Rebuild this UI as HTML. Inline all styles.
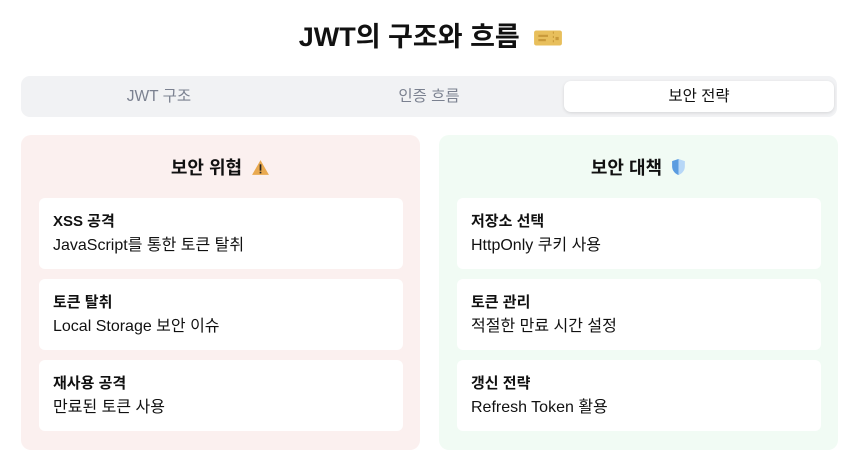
<!DOCTYPE html>
<html><head><meta charset="utf-8"><style>
*{box-sizing:border-box;margin:0;padding:0}
body{width:862px;height:466px;background:#fff;font-family:"Liberation Sans","Noto Sans CJK KR",sans-serif;color:#111;position:relative;overflow:hidden}
h1{position:absolute;left:0;right:0;top:19px;text-align:center;font-size:27px;font-weight:bold;line-height:36px}
.tabs{position:absolute;left:21px;top:76px;width:816px;height:41px;background:#f1f2f4;border-radius:9px}
.tab{position:absolute;top:5px;height:31px;width:270px;text-align:center;line-height:31px;font-size:15.5px;color:#7b8190}
.tab.on{background:#fff;color:#111;border-radius:7px;box-shadow:0 1px 3px rgba(0,0,0,.12)}
.panel{position:absolute;top:135px;width:399px;height:315px;border-radius:10px}
.panel h2{text-align:center;font-size:18px;font-weight:bold;margin-top:21px;line-height:24px}
.card{position:absolute;left:18px;width:364px;height:71px;background:#fff;border-radius:6px;padding:14px 14px}
.card b{display:block;font-size:15px;line-height:20px}
.card span{display:block;font-size:16px;line-height:22px;margin-top:3px}
</style></head><body>
<h1>JWT의 구조와 흐름 <svg width="30" height="20" viewBox="0 0 28 18" style="vertical-align:-2px;margin-left:6px"><rect x="1" y="2" width="26" height="14" rx="2" fill="#e8bf5c"/><rect x="5" y="6" width="9" height="2" fill="#c99a3a"/><rect x="5" y="10" width="7" height="2" fill="#c99a3a"/><line x1="19" y1="3" x2="19" y2="15" stroke="#c99a3a" stroke-dasharray="2 2"/><rect x="21" y="8" width="3" height="3" fill="#c99a3a"/></svg></h1>
<div class="tabs">
<div class="tab" style="left:3px">JWT 구조</div>
<div class="tab" style="left:273px">인증 흐름</div>
<div class="tab on" style="left:543px">보안 전략</div>
</div>
<div class="panel" style="left:21px;background:#fbf0ef">
<h2>보안 위협 <svg width="19" height="17" viewBox="0 0 18 16" style="vertical-align:-2px;margin-left:4px"><path d="M9 1L17 15H1Z" fill="#e9a94f"/><rect x="8.2" y="5" width="1.6" height="6" fill="#222"/><rect x="8.2" y="12" width="1.6" height="1.6" fill="#222"/></svg></h2>
<div class="card" style="top:63px"><b>XSS 공격</b><span>JavaScript를 통한 토큰 탈취</span></div>
<div class="card" style="top:144px"><b>토큰 탈취</b><span>Local Storage 보안 이슈</span></div>
<div class="card" style="top:225px"><b>재사용 공격</b><span>만료된 토큰 사용</span></div>
</div>
<div class="panel" style="left:439px;background:#f1fbf4">
<h2>보안 대책 <svg width="15" height="18" viewBox="0 0 14 17" style="vertical-align:-2px;margin-left:4px"><path d="M7 1L13 3V8C13 12 10 15 7 16C4 15 1 12 1 8V3Z" fill="#b7d7f7"/><path d="M7 1V16C4 15 1 12 1 8V3Z" fill="#5b9ce0"/></svg></h2>
<div class="card" style="top:63px"><b>저장소 선택</b><span>HttpOnly 쿠키 사용</span></div>
<div class="card" style="top:144px"><b>토큰 관리</b><span>적절한 만료 시간 설정</span></div>
<div class="card" style="top:225px"><b>갱신 전략</b><span>Refresh Token 활용</span></div>
</div>
</body></html>
